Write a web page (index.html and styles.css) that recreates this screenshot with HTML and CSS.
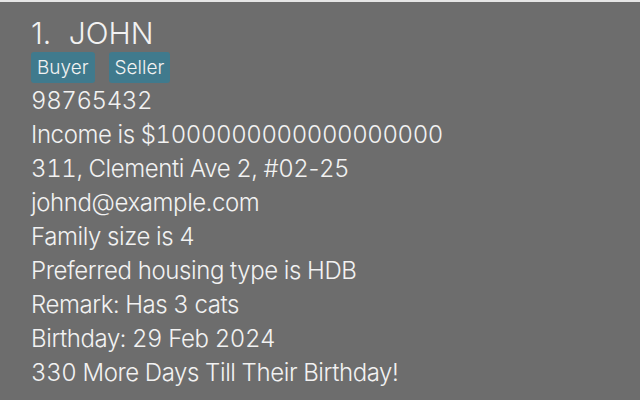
FILE: index.html
```html
<!DOCTYPE html>
<html>
<head>
<meta charset="utf-8">
<link rel="stylesheet" href="styles.css">
</head>
<body>
<div class="card">
  <div class="name">1. JOHN</div>
  <div class="tags">
    <span class="tag">Buyer</span>
    <span class="tag">Seller</span>
  </div>
  <div class="field">98765432</div>
  <div class="field">Income is $1000000000000000000</div>
  <div class="field">311, Clementi Ave 2, #02<span class="plain">-</span>25</div>
  <div class="field">johnd@example.com</div>
  <div class="field">Family size is 4</div>
  <div class="field">Preferred housing type is HDB</div>
  <div class="field">Remark: Has 3 cats</div>
  <div class="field">Birthday: 29 Feb 2024</div>
  <div class="field">330 More Days Till Their Birthday!</div>
</div>
</body>
</html>
```
FILE: styles.css
```css
html, body {
  margin: 0;
  padding: 0;
  height: 100%;
}
body {
  background: #6d6d6d;
  border-top: 2px solid #e6e6e6;
  box-sizing: border-box;
  font-family: Inter, "Noto Sans", sans-serif;
  font-weight: 300;
  color: #f2f2f2;
  overflow: hidden;
}
.card {
  padding: 14px 0 0 31px;
}
.name {
  font-size: 30px;
  line-height: 34px;
  word-spacing: 9px;
  letter-spacing: 0;
}
.tags {
  display: flex;
  gap: 14px;
  margin-top: 2px;
  margin-bottom: 1px;
}
.tag {
  background: #407a8d;
  border-radius: 3px;
  font-size: 19px;
  line-height: 31px;
  padding: 0 6px;
}
.field {
  font-size: 24px;
  line-height: 34px;
  letter-spacing: -0.4px;
  font-variant-numeric: tabular-nums;
}
.plain {
  font-variant-numeric: normal;
}
```
